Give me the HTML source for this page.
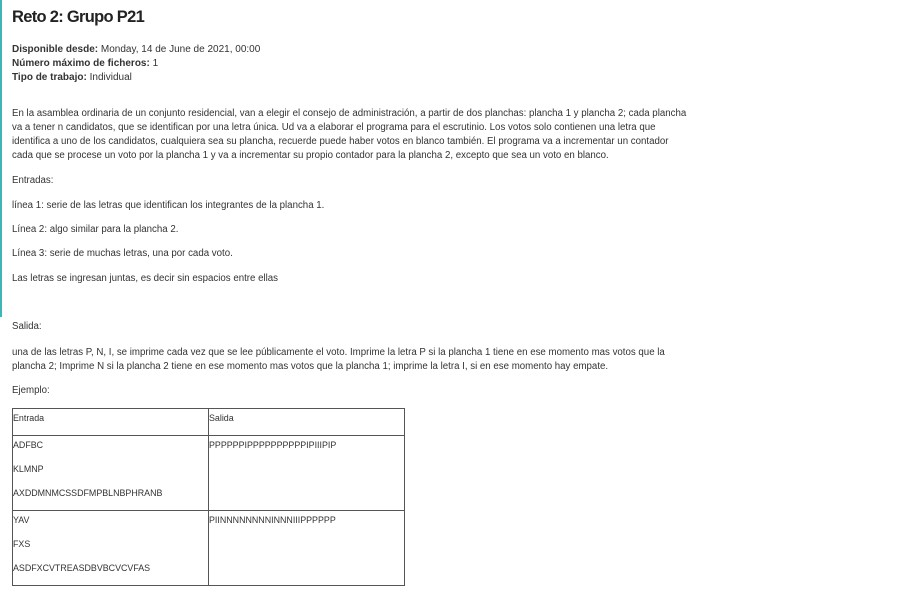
<!DOCTYPE html>
<html><head><meta charset="utf-8"><style>
body{margin:0;width:899px;height:605px;background:#fff;position:relative;overflow:hidden;font-family:"Liberation Sans",sans-serif;color:#333;}
.bar{position:absolute;left:0;top:0;width:2px;height:317px;background:#3fb5b5;}
.t{position:absolute;left:12px;white-space:nowrap;font-size:9.7px;line-height:12px;}
.m{font-size:10px;}
h1{position:absolute;left:12px;top:8px;margin:0;font-size:16.5px;font-weight:bold;color:#222;letter-spacing:-0.7px;}
b{font-weight:bold;color:#333;}
table{position:absolute;left:12px;top:408px;width:393px;border-collapse:collapse;font-size:8.9px;color:#333;}
td{border:1px solid #555;vertical-align:top;padding:3px 0 0 0;}
td p{margin:0 0 12px;line-height:12px;}
td p:last-child{margin-bottom:0;}
</style></head><body>
<div class="bar"></div>
<h1>Reto 2: Grupo P21</h1>
<div class="t m" style="top:44px"><b>Disponible desde:</b> Monday, 14 de June de 2021, 00:00</div>
<div class="t m" style="top:58px"><b>Número máximo de ficheros:</b> 1</div>
<div class="t m" style="top:72px"><b>Tipo de trabajo:</b> Individual</div>
<div class="t" style="top:108px">En la asamblea ordinaria de un conjunto residencial, van a elegir el consejo de administración, a partir de dos planchas: plancha 1 y plancha 2; cada plancha</div>
<div class="t" style="top:122px">va a tener n candidatos, que se identifican por una letra única. Ud va a elaborar el programa para el escrutinio. Los votos solo contienen una letra que</div>
<div class="t" style="top:136px">identifica a uno de los candidatos, cualquiera sea su plancha, recuerde puede haber votos en blanco también. El programa va a incrementar un contador</div>
<div class="t" style="top:150px">cada que se procese un voto por la plancha 1 y va a incrementar su propio contador para la plancha 2, excepto que sea un voto en blanco.</div>
<div class="t" style="top:175px">Entradas:</div>
<div class="t" style="top:200px">línea 1: serie de las letras que identifican los integrantes de la plancha 1.</div>
<div class="t" style="top:224px">Línea 2: algo similar para la plancha 2.</div>
<div class="t" style="top:248px">Línea 3: serie de muchas letras, una por cada voto.</div>
<div class="t" style="top:273px">Las letras se ingresan juntas, es decir sin espacios entre ellas</div>
<div class="t" style="top:321px">Salida:</div>
<div class="t" style="top:347px">una de las letras P, N, I, se imprime cada vez que se lee públicamente el voto. Imprime la letra P si la plancha 1 tiene en ese momento mas votos que la</div>
<div class="t" style="top:361px">plancha 2; Imprime N si la plancha 2 tiene en ese momento mas votos que la plancha 1; imprime la letra I, si en ese momento hay empate.</div>
<div class="t" style="top:385px">Ejemplo:</div>
<table>
<tr style="height:27px"><td style="width:195px"><p>Entrada</p></td><td><p>Salida</p></td></tr>
<tr style="height:75px"><td><p>ADFBC</p><p>KLMNP</p><p>AXDDMNMCSSDFMPBLNBPHRANB</p></td><td><p>PPPPPPIPPPPPPPPPPIPIIIPIP</p></td></tr>
<tr style="height:75px"><td><p>YAV</p><p>FXS</p><p>ASDFXCVTREASDBVBCVCVFAS</p></td><td><p>PIINNNNNNNNINNNIIIPPPPPP</p></td></tr>
</table>
</body></html>
